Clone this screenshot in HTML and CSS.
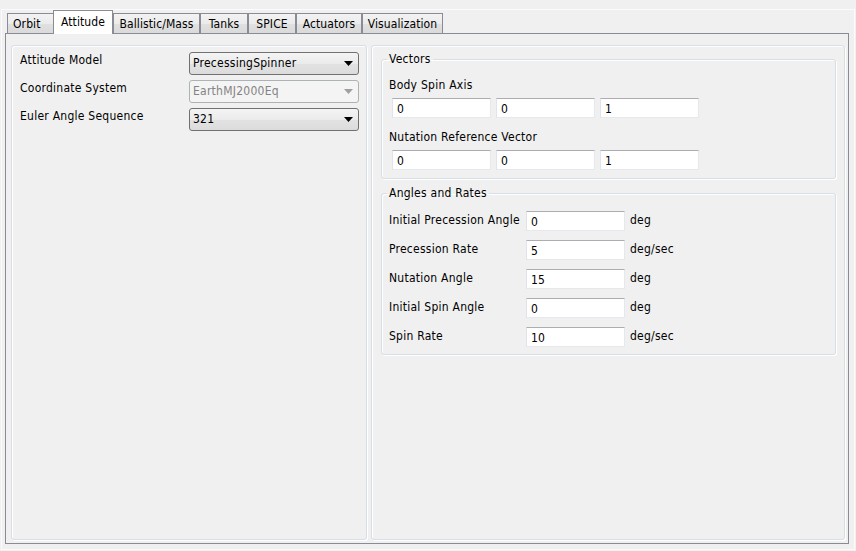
FILE: index.html
```html
<!DOCTYPE html>
<html>
<head>
<meta charset="utf-8">
<link rel="stylesheet" href="styles.css">
</head>
<body>
<div class="frame">
  <div class="tabs">
    <div class="tab t-orbit">Orbit</div>
    <div class="tab t-attitude active">Attitude</div>
    <div class="tab t-ballistic">Ballistic/Mass</div>
    <div class="tab t-tanks">Tanks</div>
    <div class="tab t-spice">SPICE</div>
    <div class="tab t-actuators">Actuators</div>
    <div class="tab t-vis">Visualization</div>
  </div>
  <div class="pane">
    <div class="panel panel-left">
      <div class="form-grid">
        <div class="lbl">Attitude Model</div>
        <div class="combo"><span class="combo-text">PrecessingSpinner</span><svg class="arrow" width="9" height="5" viewBox="0 0 9 5"><polygon points="0,0 9,0 4.5,5"/></svg></div>
        <div class="lbl">Coordinate System</div>
        <div class="combo disabled"><span class="combo-text">EarthMJ2000Eq</span><svg class="arrow" width="9" height="5" viewBox="0 0 9 5"><polygon points="0,0 9,0 4.5,5"/></svg></div>
        <div class="lbl">Euler Angle Sequence</div>
        <div class="combo"><span class="combo-text">321</span><svg class="arrow" width="9" height="5" viewBox="0 0 9 5"><polygon points="0,0 9,0 4.5,5"/></svg></div>
      </div>
    </div>
    <div class="panel panel-right">
      <fieldset class="group group-vectors">
        <legend>Vectors</legend>
        <div class="vlabel">Body Spin Axis</div>
        <div class="vrow">
          <div class="input">0</div>
          <div class="input">0</div>
          <div class="input">1</div>
        </div>
        <div class="vlabel">Nutation Reference Vector</div>
        <div class="vrow">
          <div class="input">0</div>
          <div class="input">0</div>
          <div class="input">1</div>
        </div>
      </fieldset>
      <fieldset class="group group-angles">
        <legend>Angles and Rates</legend>
        <div class="arow"><div class="alabel">Initial Precession Angle</div><div class="input">0</div><div class="unit">deg</div></div>
        <div class="arow"><div class="alabel">Precession Rate</div><div class="input">5</div><div class="unit">deg/sec</div></div>
        <div class="arow"><div class="alabel">Nutation Angle</div><div class="input">15</div><div class="unit">deg</div></div>
        <div class="arow"><div class="alabel">Initial Spin Angle</div><div class="input">0</div><div class="unit">deg</div></div>
        <div class="arow"><div class="alabel">Spin Rate</div><div class="input">10</div><div class="unit">deg/sec</div></div>
      </fieldset>
    </div>
  </div>
</div>
</body>
</html>
```

FILE: styles.css
```css
html, body {
  margin: 0;
  padding: 0;
  background: #f0f0f0;
}
body {
  font-family: "DejaVu Sans Condensed", "DejaVu Sans", sans-serif;
  font-size: 12px;
  line-height: 15px;
  letter-spacing: 0.25px;
  color: #000;
}
.frame {
  box-sizing: border-box;
  width: 854px;
  height: 541px;
  margin: 9px 0 0 1px;
  border: 1px solid #fbfbfb;
  display: flex;
  flex-direction: column;
}
.tabs {
  display: flex;
  align-items: flex-end;
  height: 23px;
  padding-left: 5px;
}
.tab {
  box-sizing: border-box;
  height: 20px;
  padding-top: 3px;
  border: 1px solid #898c95;
  border-bottom: none;
  background: linear-gradient(#f3f3f3, #ebebeb 50%, #e0e0e0 51%, #dadada);
  text-align: center;
  white-space: nowrap;
  letter-spacing: 0.1px;
}
.tab.active {
  position: relative;
  z-index: 1;
  height: 24px;
  margin-bottom: -1px;
  padding-top: 4px;
  background: #fff;
}
.t-orbit { width: 47px; text-align: left; padding-left: 5px; }
.t-attitude { width: 60px; margin-left: -1px; }
.t-ballistic { width: 87px; }
.t-tanks { width: 48px; }
.t-spice { width: 48px; }
.t-actuators { width: 66px; }
.t-vis { width: 81px; }

.pane {
  box-sizing: border-box;
  width: 844px;
  height: 511px;
  margin-left: 3px;
  border: 1px solid #898c95;
  padding: 11px 3px 3px 5px;
  display: flex;
  gap: 4px;
}
.panel {
  box-sizing: border-box;
  height: 495px;
  border: 1px solid #d5dfe5;
  border-radius: 3px;
  box-shadow: inset 1px 1px 0 #fff, 1px 1px 0 #fff;
}
.panel-left {
  width: 356px;
  padding: 6px 7px 0 8px;
}
.panel-right {
  width: 474px;
  padding: 6px 8px 0 9px;
}
.form-grid {
  display: grid;
  grid-template-columns: 169px 170px;
  row-gap: 5px;
}
.lbl {
  padding-top: 1px;
  white-space: nowrap;
}
.combo {
  box-sizing: border-box;
  height: 23px;
  border: 1px solid #707070;
  border-radius: 3px;
  background: linear-gradient(#f4f4f4, #ebebeb 50%, #e2e2e2 51%, #dcdcdc);
  display: flex;
  align-items: center;
  padding: 0 5px 0 3px;
}
.combo-text {
  flex: 1;
  white-space: nowrap;
}
.arrow { fill: #000; }
.combo.disabled {
  border-color: #adb2b5;
  background: #f4f4f4;
  color: #838383;
}
.combo.disabled .arrow { fill: #a0a0a0; }

.group {
  margin: 0;
  border: 1px solid #d5dfe5;
  border-radius: 3px;
  box-shadow: inset 1px 1px 0 #fff, 1px 1px 0 #fff;
  min-width: 0;
}
.group legend {
  padding: 0 2px;
  margin-left: -2px;
  line-height: 15px;
}
.group-vectors {
  padding: 11px 7px 8px 7px;
}
.group-angles {
  margin-top: 7px;
  padding: 10px 7px 7px 7px;
}
.vlabel {
  margin-bottom: 5px;
  white-space: nowrap;
}
.vrow {
  display: flex;
  gap: 5px;
  margin-left: 3px;
}
.vrow + .vlabel { margin-top: 12px; }
.input {
  box-sizing: border-box;
  width: 99px;
  height: 20px;
  background: #fff;
  border: 1px solid;
  border-color: #abadb3 #e3e9ef #e3e9ef #e2e3ea;
  padding: 3px 4px 0 4px;
  white-space: nowrap;
}
.arow {
  display: flex;
  align-items: flex-start;
}
.arow + .arow { margin-top: 9px; }
.alabel {
  width: 137px;
  padding-top: 2px;
  white-space: nowrap;
}
.unit {
  margin-left: 5px;
  padding-top: 2px;
  white-space: nowrap;
}
```
